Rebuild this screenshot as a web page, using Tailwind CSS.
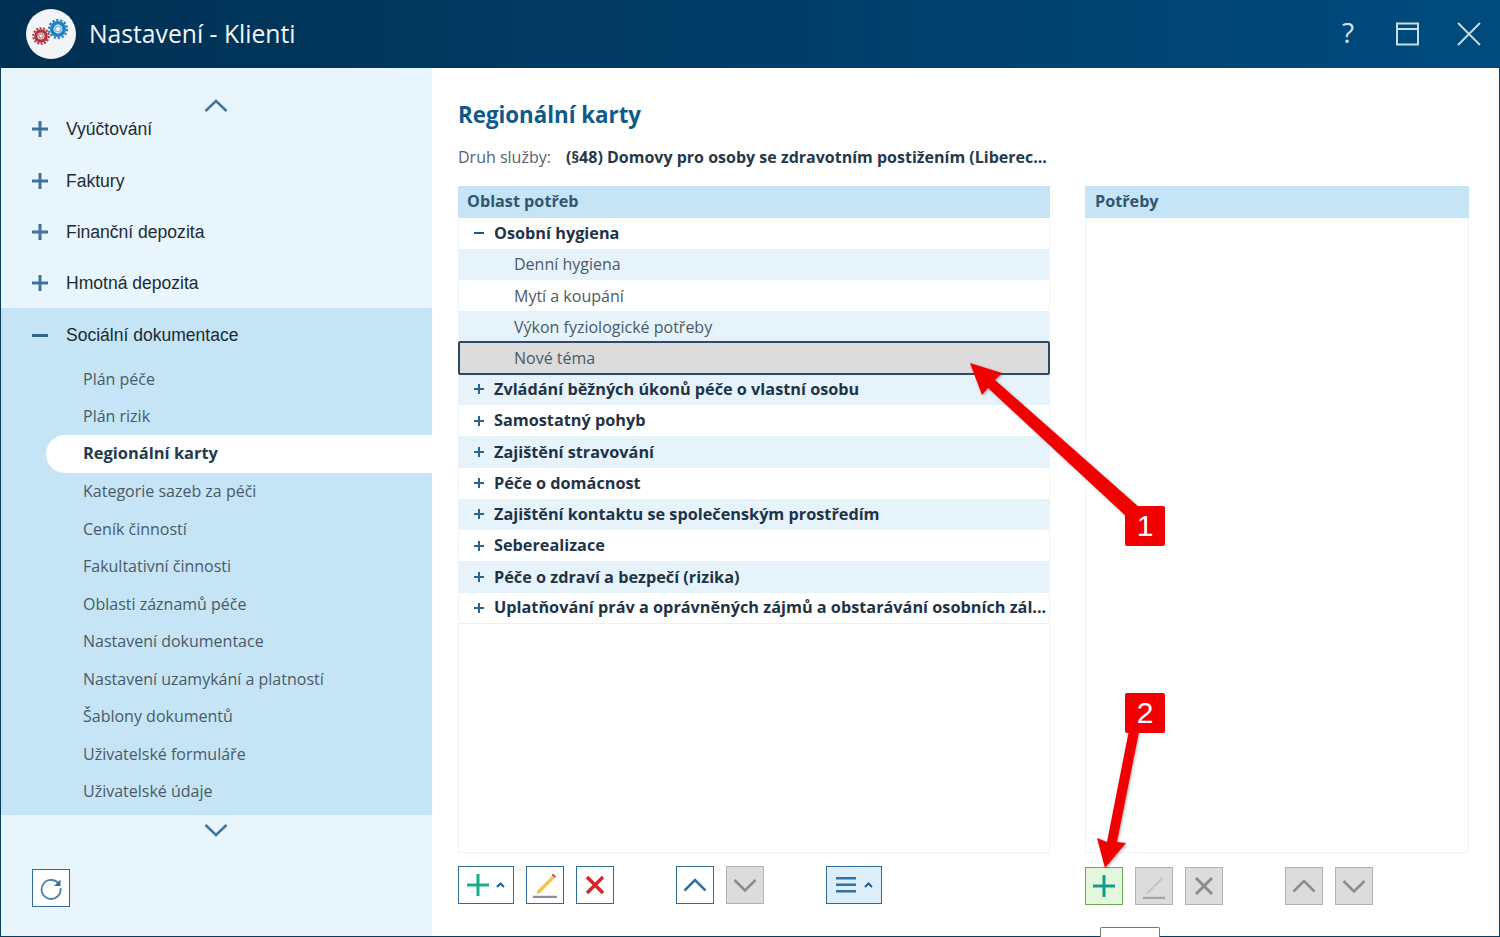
<!DOCTYPE html>
<html lang="cs"><head><meta charset="utf-8">
<script src="https://cdn.jsdelivr.net/npm/@tailwindcss/browser@4"></script></head>
<body class="m-0 overflow-hidden bg-white">
<div class="relative w-[1500px] h-[937px] flex flex-col overflow-hidden font-['Open_Sans',sans-serif] text-[#33475b]">
  <header class="h-[68px] shrink-0 flex items-center bg-gradient-to-r from-[#003052] to-[#004b7e] pl-[26px] text-white">
    <div class="w-[50px] h-[50px] rounded-full bg-[#f2f5f8] flex items-center justify-center">
      <svg width="42" height="36" viewBox="0 0 42 36" fill="none">
        <g transform="translate(28 13)"><circle r="6.200" stroke="#1f80c4" stroke-width="3.600"/><circle r="9" stroke="#1f80c4" stroke-width="2.200" stroke-dasharray="2.200 1.840"/><circle r="2.800" stroke="#8fbcdc" stroke-width="1.600"/></g>
        <g transform="translate(11 20)"><circle r="5.200" stroke="#b0303c" stroke-width="3.200"/><circle r="7.800" stroke="#b0303c" stroke-width="2" stroke-dasharray="2 1.500"/><circle r="2.200" stroke="#c98a90" stroke-width="1.400"/></g>
      </svg>
    </div>
    <h1 class="ml-[13px] text-[24.7px] leading-none font-normal text-[#f2f6f9]">Nastavení - Klienti</h1>
    <div class="ml-auto flex items-center text-[#d5e3ee]">
      <span class="text-[28px] leading-none mr-[42px] -mt-[4px]">?</span>
      <svg class="mr-[36px]" width="24" height="24" viewBox="0 0 24 24" fill="none" stroke="#c9dce9" stroke-width="2"><rect x="1" y="1.500" width="21" height="21"/><path d="M1 7h21"/></svg>
      <svg class="mr-[18px]" width="26" height="26" viewBox="0 0 26 26" fill="none" stroke="#c9dce9" stroke-width="1.800"><path d="M2 2l22 22M24 2L2 24"/></svg>
    </div>
  </header>

  <div class="flex flex-1 min-h-0 border-x border-b border-[#0d3c5f]">
    <aside class="relative w-[431px] shrink-0 bg-[#e9f5fc] flex flex-col pt-[35px]">
      <svg class="absolute left-[203px] top-[31px]" width="24" height="14" viewBox="0 0 24 14" fill="none" stroke="#43729b" stroke-width="2.500"><path d="M1.500 12L12 2l10.500 10"/></svg>
      <nav class="text-[17.55px] text-[#1c2b38] font-['Liberation_Sans',sans-serif]">
        <div class="h-[52px] flex items-center pl-[31px]"><svg width="16" height="16" viewBox="0 0 16 16" fill="#41729b"><path d="M6.500 0h3v6.500H16v3H9.500V16h-3V9.500H0v-3h6.500z"/></svg><span class="ml-[18px]">Vyúčtování</span></div>
        <div class="h-[51px] pt-[1px] flex items-center pl-[31px]"><svg width="16" height="16" viewBox="0 0 16 16" fill="#41729b"><path d="M6.500 0h3v6.500H16v3H9.500V16h-3V9.500H0v-3h6.500z"/></svg><span class="ml-[18px]">Faktury</span></div>
        <div class="h-[51px] pt-[1px] flex items-center pl-[31px]"><svg width="16" height="16" viewBox="0 0 16 16" fill="#41729b"><path d="M6.500 0h3v6.500H16v3H9.500V16h-3V9.500H0v-3h6.500z"/></svg><span class="ml-[18px]">Finanční depozita</span></div>
        <div class="h-[51px] pt-[1px] flex items-center pl-[31px]"><svg width="16" height="16" viewBox="0 0 16 16" fill="#41729b"><path d="M6.500 0h3v6.500H16v3H9.500V16h-3V9.500H0v-3h6.500z"/></svg><span class="ml-[18px]">Hmotná depozita</span></div>
        <div class="bg-[#c5e4f6] h-[507px]">
          <div class="h-[52px] pt-[2px] flex items-center pl-[31px]"><div class="w-[16px] h-[3px] bg-[#2f6390]"></div><span class="ml-[18px]">Sociální dokumentace</span></div>
          <ul class="text-[16px] text-[#4b5a66] font-['Open_Sans',sans-serif]">
            <li class="h-[37.5px] flex items-center pl-[82px]">Plán péče</li>
            <li class="h-[37.5px] flex items-center pl-[82px]">Plán rizik</li>
            <li class="h-[37.5px] flex items-center ml-[45px] pl-[37px] bg-white rounded-l-full font-bold text-[#233a4f] text-[16.45px]">Regionální karty</li>
            <li class="h-[37.5px] flex items-center pl-[82px]">Kategorie sazeb za péči</li>
            <li class="h-[37.5px] flex items-center pl-[82px]">Ceník činností</li>
            <li class="h-[37.5px] flex items-center pl-[82px]">Fakultativní činnosti</li>
            <li class="h-[37.5px] flex items-center pl-[82px]">Oblasti záznamů péče</li>
            <li class="h-[37.5px] flex items-center pl-[82px]">Nastavení dokumentace</li>
            <li class="h-[37.5px] flex items-center pl-[82px]">Nastavení uzamykání a platností</li>
            <li class="h-[37.5px] flex items-center pl-[82px]">Šablony dokumentů</li>
            <li class="h-[37.5px] flex items-center pl-[82px]">Uživatelské formuláře</li>
            <li class="h-[37.5px] flex items-center pl-[82px]">Uživatelské údaje</li>
          </ul>
        </div>
      </nav>
      <svg class="absolute left-[203px] top-[755px]" width="24" height="14" viewBox="0 0 24 14" fill="none" stroke="#43729b" stroke-width="2.500"><path d="M1.500 2L12 12 22.500 2"/></svg>
      <button class="absolute left-[31px] top-[801px] w-[38px] h-[38px] bg-white border border-[#2f6a98] flex items-center justify-center">
        <svg width="24" height="24" viewBox="0 0 24 24" fill="none" stroke="#4f7fa6" stroke-width="1.800"><path d="M20.500 9A9.500 9.500 0 1 0 21.500 12"/><path d="M21.500 3.500v6.500H15z" fill="#3a6d98" stroke="none"/></svg>
      </button>
    </aside>

    <main class="flex-1 min-w-0 pl-[26px] pt-[31px] pr-[29px] flex flex-col">
      <h2 class="text-[22.3px] leading-[32px] font-bold text-[#0f5a8a]">Regionální karty</h2>
      <div class="mt-[15px] h-[22px] flex items-center text-[16px] whitespace-nowrap">
        <span class="text-[#55626e]">Druh služby:</span>
        <b class="ml-[15px] font-bold text-[16px] text-[#26384a]">(§48) Domovy pro osoby se zdravotním postižením (Liberec...</b>
      </div>
      <div class="mt-[18px] flex gap-[35px] h-[667px]">
        <section class="w-[592px] border-x border-b border-[#eef2fa] flex flex-col">
          <div class="-mx-px h-[31.5px] pb-[2px] flex items-center pl-[9px] bg-[#c5e4f6] font-bold text-[16.2px] text-[#33566f]">Oblast potřeb</div>
          <div class="text-[16px]">
            <div class="h-[31.25px] flex items-center bg-white font-bold text-[16.25px] text-[#1f3347]"><span class="w-[35px] pl-[15px]"><span class="block w-[10px] h-[2px] bg-[#1c5683]"></span></span>Osobní hygiena</div>
            <div class="h-[31.25px] flex items-center bg-[#e6f3fb] pl-[55px] text-[#4b5a66]">Denní hygiena</div>
            <div class="h-[31.25px] flex items-center bg-white pl-[55px] text-[#4b5a66]">Mytí a koupání</div>
            <div class="h-[31.25px] flex items-center bg-[#e6f3fb] pl-[55px] text-[#4b5a66]">Výkon fyziologické potřeby</div>
            <div class="-mx-px h-[34px] -my-[1.375px] relative flex items-center bg-[#dcdcdc] pl-[54px] text-[#4b5a66] border-2 border-[#2c4a68] rounded-[2px]">Nové téma</div>
            <div class="h-[31.25px] flex items-center bg-[#e6f3fb] font-bold text-[16.25px] text-[#1f3347]"><svg class="ml-[15px] mr-[10px]" width="10" height="10" viewBox="0 0 10 10" fill="#2a6390"><path d="M4 0h2v4h4v2H6v4H4V6H0V4h4z"/></svg>Zvládání běžných úkonů péče o vlastní osobu</div>
            <div class="h-[31.25px] flex items-center bg-white font-bold text-[16.25px] text-[#1f3347]"><svg class="ml-[15px] mr-[10px]" width="10" height="10" viewBox="0 0 10 10" fill="#2a6390"><path d="M4 0h2v4h4v2H6v4H4V6H0V4h4z"/></svg>Samostatný pohyb</div>
            <div class="h-[31.25px] flex items-center bg-[#e6f3fb] font-bold text-[16.25px] text-[#1f3347]"><svg class="ml-[15px] mr-[10px]" width="10" height="10" viewBox="0 0 10 10" fill="#2a6390"><path d="M4 0h2v4h4v2H6v4H4V6H0V4h4z"/></svg>Zajištění stravování</div>
            <div class="h-[31.25px] flex items-center bg-white font-bold text-[16.25px] text-[#1f3347]"><svg class="ml-[15px] mr-[10px]" width="10" height="10" viewBox="0 0 10 10" fill="#2a6390"><path d="M4 0h2v4h4v2H6v4H4V6H0V4h4z"/></svg>Péče o domácnost</div>
            <div class="h-[31.25px] flex items-center bg-[#e6f3fb] font-bold text-[16.25px] text-[#1f3347]"><svg class="ml-[15px] mr-[10px]" width="10" height="10" viewBox="0 0 10 10" fill="#2a6390"><path d="M4 0h2v4h4v2H6v4H4V6H0V4h4z"/></svg>Zajištění kontaktu se společenským prostředím</div>
            <div class="h-[31.25px] flex items-center bg-white font-bold text-[16.25px] text-[#1f3347]"><svg class="ml-[15px] mr-[10px]" width="10" height="10" viewBox="0 0 10 10" fill="#2a6390"><path d="M4 0h2v4h4v2H6v4H4V6H0V4h4z"/></svg>Seberealizace</div>
            <div class="h-[31.25px] flex items-center bg-[#e6f3fb] font-bold text-[16.25px] text-[#1f3347]"><svg class="ml-[15px] mr-[10px]" width="10" height="10" viewBox="0 0 10 10" fill="#2a6390"><path d="M4 0h2v4h4v2H6v4H4V6H0V4h4z"/></svg>Péče o zdraví a bezpečí (rizika)</div>
            <div class="h-[31.25px] flex items-center bg-white font-bold text-[16.25px] text-[#1f3347] whitespace-nowrap border-b border-[#e6f3fb]"><svg class="ml-[15px] mr-[10px]" width="10" height="10" viewBox="0 0 10 10" fill="#2a6390"><path d="M4 0h2v4h4v2H6v4H4V6H0V4h4z"/></svg>Uplatňování práv a oprávněných zájmů a obstarávání osobních zál...</div>
          </div>
        </section>
        <section class="w-[384px] border-x border-b border-[#eef2fa]">
          <div class="-mx-px h-[31.5px] pb-[2px] flex items-center pl-[10px] bg-[#c5e4f6] font-bold text-[16.2px] text-[#33566f]">Potřeby</div>
        </section>
      </div>
      <div class="mt-[13px] flex">
        <div class="flex w-[627px] h-[38px]">
          <button class="w-[56px] h-[38px] bg-white border border-[#2f6a98] flex items-center pl-[8px]">
            <svg width="22" height="22" viewBox="0 0 22 22" fill="#1bab8f"><path d="M9.500 0h3v9.500H22v3h-9.500V22h-3v-9.500H0v-3h9.500z"/></svg>
            <svg class="ml-[7px]" width="9" height="6" viewBox="0 0 9 6" fill="none" stroke="#1f5f8f" stroke-width="2"><path d="M1 5l3.500-3.500L8 5"/></svg>
          </button>
          <button class="ml-[12px] w-[38px] h-[38px] bg-white border border-[#2f6a98] flex items-center justify-center">
            <svg width="24" height="26" viewBox="0 0 24 26" fill="none"><path d="M4 19L19 4l2.500 2.500-15 15L3.500 22z" fill="#f5c34f"/><path d="M18.500 3l1.500-1.500L23 4.500 21.500 6z" fill="#e04848"/><path d="M0 25h24" stroke="#8e8aa0" stroke-width="2.500"/></svg>
          </button>
          <button class="ml-[12px] w-[38px] h-[38px] bg-white border border-[#2f6a98] flex items-center justify-center">
            <svg width="20" height="20" viewBox="0 0 20 20" fill="none" stroke="#d8232a" stroke-width="3.400"><path d="M2 2l16 16M18 2L2 18"/></svg>
          </button>
          <button class="ml-[62px] w-[38px] h-[38px] bg-white border border-[#2f6a98] flex items-center justify-center">
            <svg width="24" height="14" viewBox="0 0 24 14" fill="none" stroke="#33719e" stroke-width="2.500"><path d="M1.500 12.500L12 2l10.500 10.500"/></svg>
          </button>
          <button class="ml-[12px] w-[38px] h-[38px] bg-[#dcdcdc] border border-[#b2b2b2] flex items-center justify-center">
            <svg width="24" height="14" viewBox="0 0 24 14" fill="none" stroke="#8c8c8c" stroke-width="2.500"><path d="M1.500 2L12 12.500 22.500 2"/></svg>
          </button>
          <button class="ml-[62px] w-[56px] h-[38px] bg-[#dceefa] border border-[#2f6a98] flex items-center pl-[9px]">
            <svg width="20" height="16" viewBox="0 0 20 16" fill="#33719e"><path d="M0 0h20v2.500H0zM0 6.500h20V9H0zM0 13h20v2.500H0z" /></svg>
            <svg class="ml-[8px]" width="9" height="6" viewBox="0 0 9 6" fill="none" stroke="#1f5f8f" stroke-width="2"><path d="M1 5l3.500-3.500L8 5"/></svg>
          </button>
        </div>
        <div class="flex mt-[1px] h-[38px]">
          <button class="w-[38px] h-[38px] bg-[#e4f6dc] border border-[#6aa84f] flex items-center justify-center">
            <svg width="22" height="22" viewBox="0 0 22 22" fill="#129a8a"><path d="M9.500 0h3v9.500H22v3h-9.500V22h-3v-9.500H0v-3h9.500z"/></svg>
          </button>
          <button class="ml-[12px] w-[38px] h-[38px] bg-[#dcdcdc] border border-[#b2b2b2] flex items-center justify-center">
            <svg width="24" height="26" viewBox="0 0 24 26" fill="none"><path d="M5 19L20 4l1.500 1.500-15 15L4 21z" fill="#c4c4c4"/><path d="M1 25h22" stroke="#a6a6a6" stroke-width="2.500"/></svg>
          </button>
          <button class="ml-[12px] w-[38px] h-[38px] bg-[#dcdcdc] border border-[#b2b2b2] flex items-center justify-center">
            <svg width="20" height="20" viewBox="0 0 20 20" fill="none" stroke="#8c8c8c" stroke-width="3"><path d="M2 2l16 16M18 2L2 18"/></svg>
          </button>
          <button class="ml-[62px] w-[38px] h-[38px] bg-[#dcdcdc] border border-[#b2b2b2] flex items-center justify-center">
            <svg width="24" height="14" viewBox="0 0 24 14" fill="none" stroke="#8c8c8c" stroke-width="2.500"><path d="M1.500 12.500L12 2l10.500 10.500"/></svg>
          </button>
          <button class="ml-[12px] w-[38px] h-[38px] bg-[#dcdcdc] border border-[#b2b2b2] flex items-center justify-center">
            <svg width="24" height="14" viewBox="0 0 24 14" fill="none" stroke="#8c8c8c" stroke-width="2.500"><path d="M1.500 2L12 12.500 22.500 2"/></svg>
          </button>
        </div>
      </div>
    </main>
  </div>

  <div class="absolute left-[1100px] top-[927px] w-[60px] h-[10px] bg-white border border-b-0 border-[#777] rounded-t-[2px]"></div>

  <svg class="absolute left-0 top-0 pointer-events-none" width="1500" height="937" viewBox="0 0 1500 937" fill="#f00000">
    <defs><filter id="s" x="-20%" y="-20%" width="140%" height="140%"><feDropShadow dx="1" dy="1" stdDeviation="1.500" flood-color="#000" flood-opacity=".3"/></filter></defs>
    <path filter="url(#s)" d="M970 363L1002 373 995 380 1140 508 1128 518 988 388 982 395z"/>
    <path filter="url(#s)" d="M1129 730L1139 732 1117 842 1126 843 1105 868 1097 838 1107 842z"/>
  </svg>
  <div class="absolute left-[1125px] top-[506px] w-[40px] h-[40px] bg-[#f00000] rounded-[2px] flex items-center justify-center text-white text-[30px] leading-none font-['Liberation_Sans',sans-serif]">1</div>
  <div class="absolute left-[1125px] top-[693px] w-[40px] h-[40px] bg-[#f00000] rounded-[2px] flex items-center justify-center text-white text-[30px] leading-none font-['Liberation_Sans',sans-serif]">2</div>
</div>
</body></html>
